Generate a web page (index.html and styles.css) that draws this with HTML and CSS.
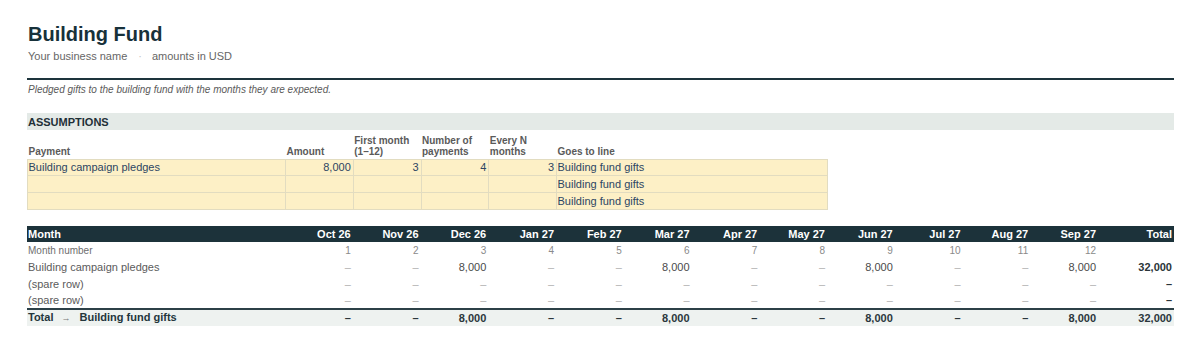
FILE: index.html
```html
<!DOCTYPE html>
<html lang="en">
<head>
<meta charset="utf-8">
<title>Building Fund</title>
<link rel="stylesheet" href="styles.css">
</head>
<body>
<div class="page">
  <header class="head">
    <h1 class="title">Building Fund</h1>
    <div class="sub"><span>Your business name</span><span class="sep">·</span><span>amounts in USD</span></div>
  </header>
  <p class="note">Pledged gifts to the building fund with the months they are expected.</p>

  <div class="band">ASSUMPTIONS</div>
  <table class="assume">
    <colgroup>
      <col class="c-label"><col class="c-m"><col class="c-m"><col class="c-m"><col class="c-m"><col class="c-goes">
    </colgroup>
    <thead>
      <tr>
        <th class="l">Payment</th>
        <th class="l">Amount</th>
        <th class="l">First month<br>(1–12)</th>
        <th class="l">Number of<br>payments</th>
        <th class="l">Every N<br>months</th>
        <th class="l">Goes to line</th>
      </tr>
    </thead>
    <tbody>
      <tr><td class="l">Building campaign pledges</td><td class="r">8,000</td><td class="r">3</td><td class="r">4</td><td class="r">3</td><td class="l">Building fund gifts</td></tr>
      <tr><td class="l"></td><td class="r"></td><td class="r"></td><td class="r"></td><td class="r"></td><td class="l">Building fund gifts</td></tr>
      <tr><td class="l"></td><td class="r"></td><td class="r"></td><td class="r"></td><td class="r"></td><td class="l">Building fund gifts</td></tr>
    </tbody>
  </table>

  <table class="sched">
    <colgroup>
      <col class="c-label">
      <col class="c-m"><col class="c-m"><col class="c-m"><col class="c-m"><col class="c-m"><col class="c-m">
      <col class="c-m"><col class="c-m"><col class="c-m"><col class="c-m"><col class="c-m"><col class="c-m">
      <col class="c-total">
    </colgroup>
    <thead>
      <tr>
        <th class="l">Month</th>
        <th>Oct 26</th><th>Nov 26</th><th>Dec 26</th><th>Jan 27</th><th>Feb 27</th><th>Mar 27</th>
        <th>Apr 27</th><th>May 27</th><th>Jun 27</th><th>Jul 27</th><th>Aug 27</th><th>Sep 27</th>
        <th>Total</th>
      </tr>
    </thead>
    <tbody>
      <tr class="mnum">
        <td class="l">Month number</td>
        <td>1</td><td>2</td><td>3</td><td>4</td><td>5</td><td>6</td><td>7</td><td>8</td><td>9</td><td>10</td><td>11</td><td>12</td><td></td>
      </tr>
      <tr>
        <td class="l">Building campaign pledges</td>
        <td class="z">–</td><td class="z">–</td><td>8,000</td><td class="z">–</td><td class="z">–</td><td>8,000</td>
        <td class="z">–</td><td class="z">–</td><td>8,000</td><td class="z">–</td><td class="z">–</td><td>8,000</td>
        <td class="tot">32,000</td>
      </tr>
      <tr>
        <td class="l">(spare row)</td>
        <td class="z">–</td><td class="z">–</td><td class="z">–</td><td class="z">–</td><td class="z">–</td><td class="z">–</td>
        <td class="z">–</td><td class="z">–</td><td class="z">–</td><td class="z">–</td><td class="z">–</td><td class="z">–</td>
        <td class="tot">–</td>
      </tr>
      <tr>
        <td class="l">(spare row)</td>
        <td class="z">–</td><td class="z">–</td><td class="z">–</td><td class="z">–</td><td class="z">–</td><td class="z">–</td>
        <td class="z">–</td><td class="z">–</td><td class="z">–</td><td class="z">–</td><td class="z">–</td><td class="z">–</td>
        <td class="tot">–</td>
      </tr>
      <tr class="total">
        <td class="l">Total <span class="arrow">→</span> Building fund gifts</td>
        <td>–</td><td>–</td><td>8,000</td><td>–</td><td>–</td><td>8,000</td>
        <td>–</td><td>–</td><td>8,000</td><td>–</td><td>–</td><td>8,000</td>
        <td>32,000</td>
      </tr>
    </tbody>
  </table>
</div>
</body>
</html>
```

FILE: styles.css
```css
* { box-sizing: border-box; }

html, body {
  margin: 0;
  padding: 0;
  background: #ffffff;
}

body {
  font-family: "Liberation Sans", Arial, sans-serif;
  color: #333;
}

.page {
  padding: 22px 26px 0 27px;
}

.title {
  margin: 0;
  padding-left: 1px;
  font-size: 20px;
  line-height: 24px;
  font-weight: 700;
  color: #17313a;
}

.sub {
  margin-top: 3px;
  padding-left: 1px;
  font-size: 11px;
  line-height: 14px;
  color: #666;
  display: flex;
}

.sub .sep {
  color: #c4c4c4;
  margin: 0 10px 0 11px;
}

.note {
  margin: 15px 0 0;
  border-top: 2px solid #1d343c;
  padding: 3.5px 0 0 1px;
  font-size: 10px;
  line-height: 12px;
  font-style: italic;
  color: #5a5a5a;
}

.band {
  margin-top: 17.5px;
  height: 17px;
  padding: 1px 0 0 1px;
  line-height: 16px;
  font-size: 11px;
  font-weight: 700;
  color: #1f3037;
  background: #e4eae7;
}

table {
  border-collapse: collapse;
  table-layout: fixed;
}

.c-label { width: 258px; }
.c-m { width: 67.75px; }
.c-goes { width: 271px; }
.c-total { width: 76px; }

/* assumptions */
.assume {
  width: 800px;
  margin-top: 5px;
}

.assume th {
  font-size: 10px;
  line-height: 11px;
  font-weight: 700;
  color: #5a5a5a;
  vertical-align: bottom;
  padding: 0 2px 1.5px 1px;
  text-align: left;
}

.assume td {
  height: 16.7px;
  padding: 0 2px 0 0.5px;
  font-size: 11px;
  line-height: 14px;
  color: #2c4563;
  background: #fdf0c6;
  border: 1px solid #e2dcc0;
  white-space: nowrap;
}

.assume td.r { text-align: right; }
.assume td.l { text-align: left; }

/* schedule */
.sched {
  width: 1147px;
  margin-top: 16px;
}

.sched th {
  height: 16.7px;
  padding: 0 2px;
  font-size: 11px;
  line-height: 14px;
  font-weight: 700;
  color: #ffffff;
  background: #1c323a;
  text-align: right;
  white-space: nowrap;
}

.sched td {
  height: 16.7px;
  padding: 0 2px;
  font-size: 11px;
  line-height: 14px;
  color: #4a4a4a;
  text-align: right;
  white-space: nowrap;
}

.sched th.l,
.sched td.l {
  text-align: left;
  padding-left: 1px;
}

.sched td.l { color: #5b5b5b; }

.sched td.z { color: #b0b0b0; }

.sched td.tot {
  font-weight: 700;
  color: #2a3438;
}

.sched tr.mnum td {
  font-size: 10px;
  color: #8a8a8a;
}

.sched tr.mnum td.l { color: #6e6e6e; }

.sched tr.total td {
  font-weight: 700;
  color: #2b373c;
  background: #eef2f0;
  border-top: 2px solid #2c4047;
}

.sched tr.total td.l { color: #24363c; }

.arrow {
  font-weight: 400;
  font-size: 9px;
  color: #777;
  margin: 0 6px 0 5px;
}
```
